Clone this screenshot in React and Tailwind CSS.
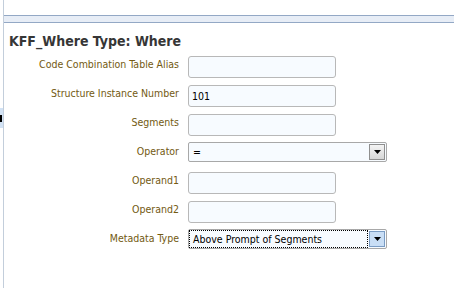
import React from 'react';

const font = { fontFamily: '"DejaVu Sans Condensed", "DejaVu Sans", "Liberation Sans", sans-serif' };

function Row({ label, children }) {
  return (
    <div className="flex items-start h-[22px]">
      <div className="w-[175px] shrink-0 text-right pt-[1px] text-[10.5px] leading-[15px] text-[#735a12]">{label}</div>
      <div className="ml-[9px]">{children}</div>
    </div>
  );
}

function TextInput({ value }) {
  return (
    <div className="w-[148px] h-[22px] rounded-[3px] border border-[#b8b8b8] bg-[#f7fbff] px-[3px] text-[10.5px] leading-[20px] text-black">
      {value}
    </div>
  );
}

function Select({ value, focused }) {
  return (
    <div className="w-[199px] h-[20px] -mt-px flex items-stretch rounded-[2px] border border-[#a8a8a8] bg-[#f7fbff] text-[10.5px] text-black">
      <div
        className={
          focused
            ? 'flex-1 border border-dotted border-black px-[3px] leading-[16px]'
            : 'flex-1 px-[4px] leading-[18px]'
        }
      >
        {value}
      </div>
      <div
        className={
          focused
            ? 'w-[16px] m-[1px] flex items-center justify-center border border-[#7a9cc4] bg-[#c9def5]'
            : 'w-[16px] m-[1px] flex items-center justify-center border border-[#8f8f8f] bg-gradient-to-b from-[#f4f4f4] to-[#d6d6d6]'
        }
      >
        <svg width="7" height="4" viewBox="0 0 7 4">
          <path d="M0 0h7L3.5 4z" fill="#000" />
        </svg>
      </div>
    </div>
  );
}

export default function App() {
  return (
    <div className="w-[454px] h-[288px] bg-white flex overflow-hidden" style={font}>
      {/* splitter handle */}
      <div className="w-[3px] shrink-0 flex flex-col">
        <div className="h-[108px]" />
        <div className="h-[20px] bg-[#d2e2f4] flex flex-col">
          <div className="h-[7px]" />
          <div className="h-[7px] w-[2px] bg-black" />
        </div>
      </div>

      <div className="flex-1 border-l border-[#c3cedb] flex flex-col">
        <div className="h-[15px]" />
        <div className="h-[8px] border-y border-[#93a8c5] bg-[#e7edf6]" />

        <h1 className="mt-[10px] pl-[5px] text-[14px] leading-[17px] font-bold text-[#363636]">
          KFF_Where Type: Where
        </h1>

        <div className="mt-[6px] flex flex-col gap-[7px]">
          <Row label="Code Combination Table Alias"><TextInput /></Row>
          <Row label="Structure Instance Number"><TextInput value="101" /></Row>
          <Row label="Segments"><TextInput /></Row>
          <Row label="Operator"><Select value="=" /></Row>
          <Row label="Operand1"><TextInput /></Row>
          <Row label="Operand2"><TextInput /></Row>
          <Row label="Metadata Type"><Select value="Above Prompt of Segments" focused /></Row>
        </div>
      </div>
    </div>
  );
}
